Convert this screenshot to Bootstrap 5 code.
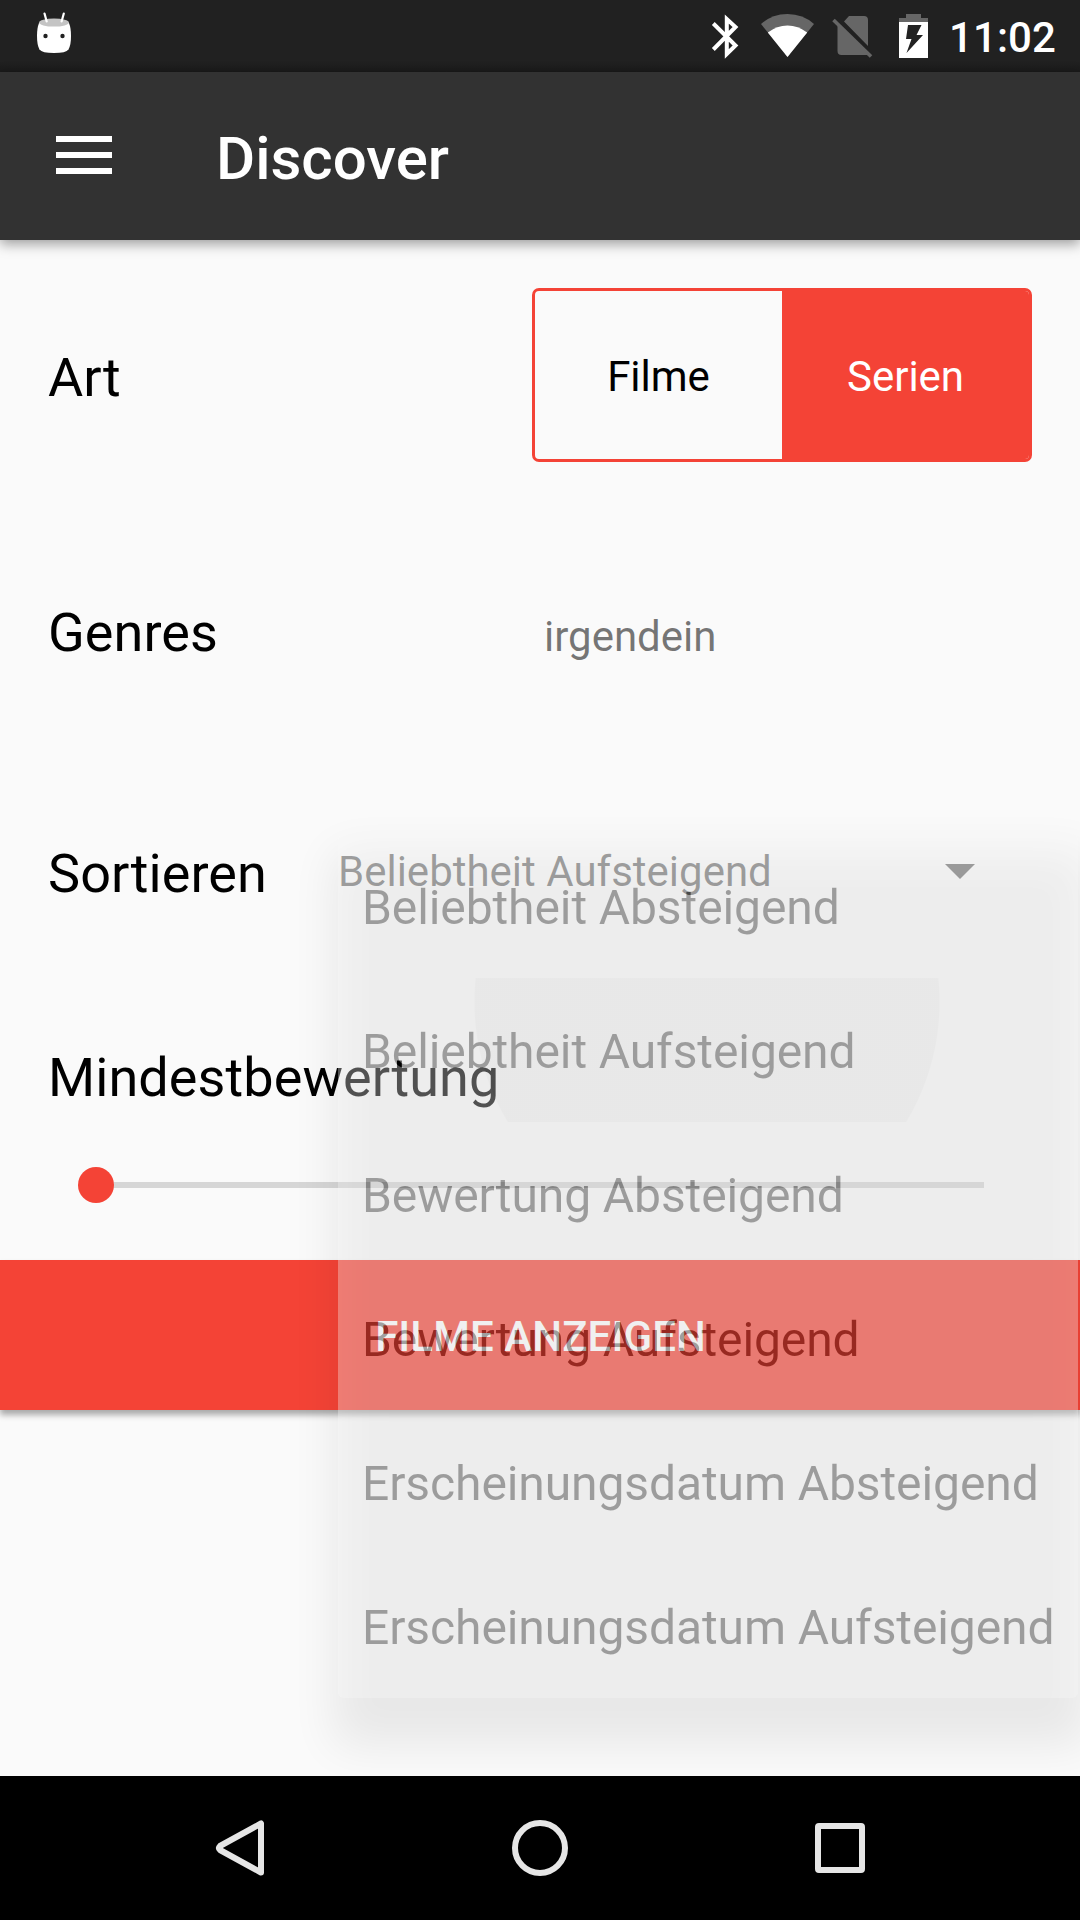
<!DOCTYPE html>
<html lang="de">
<head>
<meta charset="utf-8">
<meta name="viewport" content="width=device-width, initial-scale=1">
<title>Discover</title>
<link rel="stylesheet" href="https://cdn.jsdelivr.net/npm/bootstrap@5.3.0/dist/css/bootstrap.min.css">
<style>
  html, body { width: 1080px; height: 1920px; overflow: hidden; }
  body { font-family: Roboto, "Liberation Sans", sans-serif; background: #fafafa; color: #000; line-height: 1.2; }
  .statusbar { height: 72px; background: linear-gradient(#212121 62px, #1a1a1a 72px); color: #fff; padding: 0 24px 0 30px; }
  .clock { font-size: 42px; font-weight: 500; padding-top: 5px; margin-left: 19px; letter-spacing: .1px; }
  .appbar { height: 168px; background: #323232; color: #fff; padding: 0 56px; box-shadow: 0 4px 12px rgba(0,0,0,.38); z-index: 2; }
  .appbar svg { margin-bottom: 2px; }
  .appbar h1 { font-size: 60px; font-weight: 500; line-height: 72px; padding-top: 5px; margin-left: 104px; }
  .screen { height: 1536px; }
  .field { padding: 0 48px; }
  .field-art { height: 270px; }
  .field-genres { height: 240px; }
  .field-sort { height: 242px; }
  .field-rating { padding-top: 49px; padding-bottom: 72px; }
  .caption { font-size: 54px; line-height: 64px; padding-top: 5px; letter-spacing: .08px; }
  .field-genres .caption { width: 496px; }
  .field-genres .value { padding-top: 14px; }
  .field-sort .caption { width: 290px; }
  .field-sort svg { margin-right: 57px; }
  .value { font-size: 42px; color: rgba(0,0,0,.54); padding-top: 3px; }
  .switch { width: 500px; height: 174px; border: 3px solid #f44336; border-radius: 7px; font-size: 42px; overflow: hidden; }
  .switch .opt { padding-top: 5px; }
  .switch .opt.on { background: #f44336; color: #fff; }
  .track { height: 6px; background: rgba(0,0,0,.14); margin: 72px 48px 0; width: 888px; }
  .thumb { width: 36px; height: 36px; border-radius: 50%; background: #f44336; left: -18px; top: -15px; }
  .submit { height: 150px; background: #f44336; color: #fff; font-size: 42px; font-weight: 500; padding: 4px 0 0 1px; letter-spacing: .1px; box-shadow: 0 5px 6px rgba(0,0,0,.32); }
  .popup-shade { left: 334px; top: 612px; width: 754px; height: 894px; background: #000; opacity: .069; border-radius: 6px; filter: blur(23px); }
  .popup { left: 338px; top: 594px; width: 740px; background: #fafafa; border-radius: 6px; opacity: .32; overflow: hidden; }
  .popup .entry { height: 144px; padding: 3px 0 0 24px; font-size: 48px; letter-spacing: -.1px; white-space: nowrap; color: #000; }
  .popup .pressed { background: radial-gradient(circle 233px at 369px 24px, rgba(0,0,0,.05) 232px, transparent 233px); }
  .navkeys { height: 144px; background: #000; z-index: 3; }
</style>
<script src="https://cdn.jsdelivr.net/npm/bootstrap@5.3.0/dist/js/bootstrap.bundle.min.js"></script>
</head>
<body class="d-flex flex-column m-0">

<div class="statusbar d-flex align-items-center flex-shrink-0">
  <svg width="48" height="72" viewBox="30 0 48 72">
    <path d="M39 23Q37 28 37 36Q37 45 39.5 49.5Q42 53 54 53Q66 53 68.5 49.5Q71 45 71 36Q71 28 69 23Z" fill="#fff"/>
    <ellipse cx="54" cy="22.6" rx="15" ry="4" fill="#c4c4c4"/>
    <path d="M44.5 13.5l2.2 8M63.8 13.5l-2.2 8" stroke="#fff" stroke-width="2.2" stroke-linecap="round"/>
    <circle cx="45.5" cy="36" r="2.2" fill="#212121"/><circle cx="62.5" cy="36" r="2.2" fill="#212121"/>
  </svg>
  <svg class="ms-auto" width="224" height="72" viewBox="706 0 224 72">
    <path d="M713.300 23.500L735.500 45.500L726.800 54V19L735.500 27L713.300 49.500" fill="none" stroke="#fff" stroke-width="4" stroke-miterlimit="10"/>
    <path d="M787.500 57L761 24Q772 14 787.500 14T814 24Z" fill="#666"/>
    <path d="M787.500 57L767.800 32.500Q777 25.500 787.500 25.500T807.200 32.500Z" fill="#fff"/>
    <path d="M849 16H864Q868 16 868 20V46L844 21.500ZM837.500 24.500L868 55H841.500Q837.500 55 837.500 51Z" fill="#666"/>
    <path d="M833.500 20L871 56.500" stroke="#666" stroke-width="3.600"/>
    <path d="M899 22V18H906V14H921V18H928V22Z" fill="#666"/>
    <path d="M899 22H928V58H899Z" fill="#fff"/>
    <path d="M908 25H921.500L916.500 35H923L906.500 53L911.500 39H906Z" fill="#212121"/>
  </svg>
  <span class="clock">11:02</span>
</div>

<header class="appbar d-flex align-items-center flex-shrink-0 position-relative">
  <svg width="56" height="38" viewBox="0 0 56 38" fill="#fff"><path d="M0 0h56v6H0zM0 16h56v6H0zM0 32h56v6H0z"/></svg>
  <h1 class="mb-0">Discover</h1>
</header>

<main class="screen position-relative overflow-hidden flex-shrink-0">
  <div class="field field-art d-flex align-items-center justify-content-between">
    <div class="caption">Art</div>
    <div class="switch d-flex text-center">
      <div class="opt w-50 d-flex align-items-center justify-content-center">Filme</div>
      <div class="opt on w-50 d-flex align-items-center justify-content-center">Serien</div>
    </div>
  </div>
  <div class="field field-genres d-flex align-items-center">
    <div class="caption">Genres</div>
    <div class="value">irgendein</div>
  </div>
  <div class="field field-sort d-flex align-items-center">
    <div class="caption">Sortieren</div>
    <div class="value">Beliebtheit Aufsteigend</div>
    <svg class="ms-auto" width="30" height="15" viewBox="0 0 30 15"><path d="M0 0h30L15 15z" fill="#737373"/></svg>
  </div>
  <div class="field field-rating">
    <div class="caption">Mindestbewertung</div>
    <div class="track position-relative"><div class="thumb position-absolute"></div></div>
  </div>
  <div class="submit d-flex align-items-center justify-content-center">FILME ANZEIGEN</div>

  <div class="popup-shade position-absolute"></div>
  <div class="popup position-absolute">
    <div class="entry d-flex align-items-center">Beliebtheit Absteigend</div>
    <div class="entry pressed d-flex align-items-center">Beliebtheit Aufsteigend</div>
    <div class="entry d-flex align-items-center">Bewertung Absteigend</div>
    <div class="entry d-flex align-items-center">Bewertung Aufsteigend</div>
    <div class="entry d-flex align-items-center">Erscheinungsdatum Absteigend</div>
    <div class="entry d-flex align-items-center">Erscheinungsdatum Aufsteigend</div>
  </div>
</main>

<nav class="navkeys d-flex align-items-center justify-content-center flex-shrink-0 position-relative">
  <svg width="660" height="60" viewBox="210 1818 660 60" fill="none" stroke="#e6e6e6" stroke-width="6" stroke-linejoin="round">
    <path d="M261 1823.500V1872.500L220 1850Q218 1848 220 1846Z"/>
    <circle cx="540" cy="1848" r="25"/>
    <rect x="818" y="1826" width="44" height="44" rx="1"/>
  </svg>
</nav>
</body>
</html>
